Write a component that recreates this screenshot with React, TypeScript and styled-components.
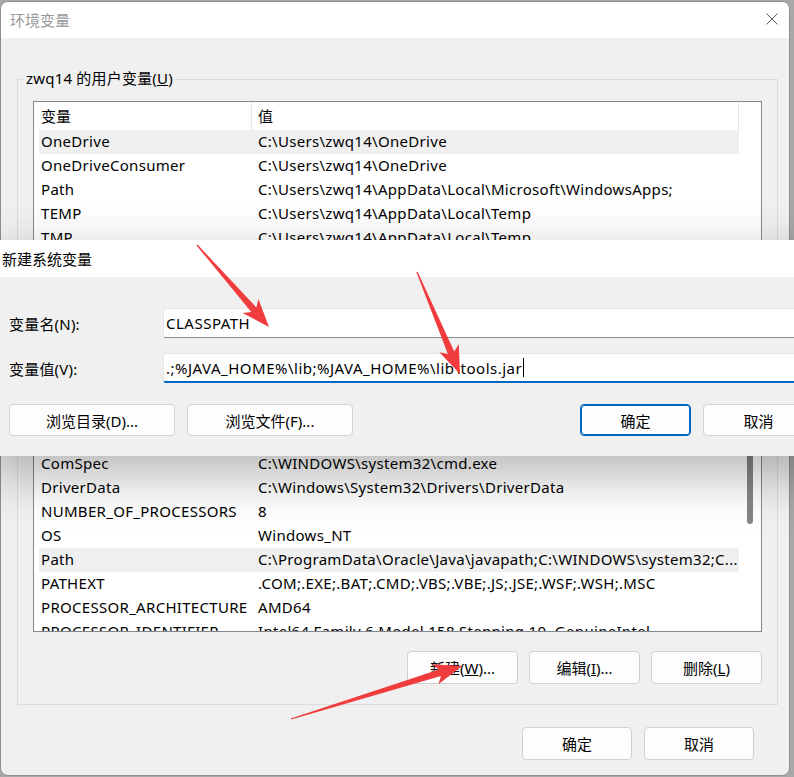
import React from 'react';
import styled, { createGlobalStyle } from 'styled-components';

const GlobalStyle = createGlobalStyle`
  html, body {
    margin: 0;
    padding: 0;
  }
  body {
    font-family: "Noto Sans", "Noto Sans CJK SC", sans-serif;
  }
`;

type Row = { name: string; value: string; selected?: boolean };

const userVars: Row[] = [
  { name: 'OneDrive', value: 'C:\\Users\\zwq14\\OneDrive', selected: true },
  { name: 'OneDriveConsumer', value: 'C:\\Users\\zwq14\\OneDrive' },
  { name: 'Path', value: 'C:\\Users\\zwq14\\AppData\\Local\\Microsoft\\WindowsApps;' },
  { name: 'TEMP', value: 'C:\\Users\\zwq14\\AppData\\Local\\Temp' },
  { name: 'TMP', value: 'C:\\Users\\zwq14\\AppData\\Local\\Temp' },
];

const systemVars: Row[] = [
  { name: 'ComSpec', value: 'C:\\WINDOWS\\system32\\cmd.exe' },
  { name: 'DriverData', value: 'C:\\Windows\\System32\\Drivers\\DriverData' },
  { name: 'NUMBER_OF_PROCESSORS', value: '8' },
  { name: 'OS', value: 'Windows_NT' },
  { name: 'Path', value: 'C:\\ProgramData\\Oracle\\Java\\javapath;C:\\WINDOWS\\system32;C...', selected: true },
  { name: 'PATHEXT', value: '.COM;.EXE;.BAT;.CMD;.VBS;.VBE;.JS;.JSE;.WSF;.WSH;.MSC' },
  { name: 'PROCESSOR_ARCHITECTURE', value: 'AMD64' },
  { name: 'PROCESSOR_IDENTIFIER', value: 'Intel64 Family 6 Model 158 Stepping 10, GenuineIntel' },
  { name: 'PROCESSOR_LEVEL', value: '6' },
];

// tapered marker arrows drawn on top of the screenshot
const arrows = [
  { x1: 197, y1: 245, x2: 269, y2: 327 },
  { x1: 417, y1: 272, x2: 460, y2: 374 },
  { x1: 291, y1: 719, x2: 462, y2: 666 },
];

const arrowPoints = ({ x1, y1, x2, y2 }: { x1: number; y1: number; x2: number; y2: number }) => {
  const dx = x2 - x1;
  const dy = y2 - y1;
  const len = Math.hypot(dx, dy);
  const ux = dx / len;
  const uy = dy / len;
  const px = -uy;
  const py = ux;
  const headLen = 28;
  const headW = 10.5;
  const bx = x2 - ux * headLen;
  const by = y2 - uy * headLen;
  const nx = bx + ux * 5;
  const ny = by + uy * 5;
  const pts = [
    [x1 + px * 0.6, y1 + py * 0.6],
    [nx + px * 3.4, ny + py * 3.4],
    [bx + px * headW, by + py * headW],
    [x2, y2],
    [bx - px * headW, by - py * headW],
    [nx - px * 3.4, ny - py * 3.4],
    [x1 - px * 0.6, y1 - py * 0.6],
  ];
  return pts.map(p => p.map(v => v.toFixed(1)).join(',')).join(' ');
};

const VarList = ({ rows, height, scroll }: { rows: Row[]; height: number; scroll?: boolean }) => (
  <ListBox $height={height}>
    <ListMain>
      <ListHeader>
        <HeaderCell>变量</HeaderCell>
        <HeaderCell>值</HeaderCell>
      </ListHeader>
      {rows.map(r => (
        <ListRow key={r.name} $selected={r.selected}>
          <NameCell>{r.name}</NameCell>
          <ValueCell>{r.value}</ValueCell>
        </ListRow>
      ))}
    </ListMain>
    <ScrollTrack>{scroll && <ScrollThumb />}</ScrollTrack>
  </ListBox>
);

const App = () => (
  <>
    <GlobalStyle />
    <Desktop>
      <Window>
        <TitleBar>
          <WindowTitle>环境变量</WindowTitle>
          <CloseButton>
            <svg width="12" height="12" viewBox="0 0 12 12">
              <path d="M0.5 0.5 L11.5 11.5 M11.5 0.5 L0.5 11.5" stroke="#5a5a5a" strokeWidth="1" fill="none" />
            </svg>
          </CloseButton>
        </TitleBar>

        <WindowBody>
          <GroupBox>
            <Legend>
              zwq14 的用户变量(<u>U</u>)
            </Legend>
            <VarList rows={userVars} height={200} />
            <ButtonRow>
              <Button>
                新建(<u>N</u>)...
              </Button>
              <Button>
                编辑(<u>E</u>)...
              </Button>
              <Button>
                删除(<u>D</u>)
              </Button>
            </ButtonRow>
          </GroupBox>

          <GroupBox $gap={27}>
            <Legend>
              系统变量(<u>S</u>)
            </Legend>
            <VarList rows={systemVars} height={209} scroll />
            <ButtonRow>
              <Button>
                新建(<u>W</u>)...
              </Button>
              <Button>
                编辑(<u>I</u>)...
              </Button>
              <Button>
                删除(<u>L</u>)
              </Button>
            </ButtonRow>
          </GroupBox>

          <FooterRow>
            <Button $width={110}>确定</Button>
            <Button $width={110}>取消</Button>
          </FooterRow>
        </WindowBody>
      </Window>

      <Dialog>
        <DialogTitle>新建系统变量</DialogTitle>
        <DialogBody>
          <FieldGrid>
            <FieldLabel>变量名(N):</FieldLabel>
            <Field>CLASSPATH</Field>
            <FieldLabel>变量值(V):</FieldLabel>
            <Field $focused>
              .;%JAVA_HOME%\lib;%JAVA_HOME%\lib\tools.jar
              <Caret />
            </Field>
          </FieldGrid>
          <DialogButtons>
            <Button $width={166}>浏览目录(D)...</Button>
            <Button $width={166}>浏览文件(F)...</Button>
            <Spacer />
            <Button $width={111} $primary>
              确定
            </Button>
            <Button $width={111}>取消</Button>
          </DialogButtons>
        </DialogBody>
      </Dialog>

      <Marks width="794" height="777" viewBox="0 0 794 777">
        {arrows.map((a, i) => (
          <polygon key={i} points={arrowPoints(a)} fill="#f03c3c" />
        ))}
      </Marks>
    </Desktop>
  </>
);

const Desktop = styled.div`
  position: relative;
  width: 794px;
  height: 777px;
  overflow: hidden;
  background: #a8a8a8;
  font-family: "Noto Sans", "Noto Sans CJK SC", sans-serif;
  font-size: 15px;
  color: #000;
`;

const Window = styled.div`
  position: absolute;
  left: 0;
  top: 1px;
  width: 790px;
  height: 775px;
  box-sizing: border-box;
  border: 1px solid #8f8f8f;
  border-radius: 8px;
  background: #f0f0f0;
  overflow: hidden;
  display: flex;
  flex-direction: column;
`;

const TitleBar = styled.div`
  height: 36px;
  flex-shrink: 0;
  background: #fff;
  display: flex;
  align-items: center;
  justify-content: space-between;
  padding: 0 10px 0 9px;
`;

const WindowTitle = styled.span`
  color: #9a9a9a;
  font-size: 15px;
  margin-top: -2px;
`;

const CloseButton = styled.span`
  display: flex;
  width: 12px;
  height: 12px;
  margin: -2px 1px 0 0;
`;

const WindowBody = styled.div`
  flex: 1;
  display: flex;
  flex-direction: column;
  padding: 0 11px 0 16px;
`;

const GroupBox = styled.div<{ $gap?: number }>`
  margin-top: ${p => p.$gap ?? 41}px;
  border: 1px solid #dcdcdc;
  padding: 0 15px 20px;
  display: flex;
  flex-direction: column;
`;

const Legend = styled.div`
  width: fit-content;
  margin: -12px 0 13px -9px;
  padding: 0 2px;
  line-height: 20px;
  letter-spacing: 0.2px;
  background: #f0f0f0;
`;

const ListBox = styled.div<{ $height: number }>`
  height: ${p => p.$height}px;
  box-sizing: border-box;
  border: 1px solid #828790;
  background: #fff;
  display: flex;
  overflow: hidden;
`;

const ListMain = styled.div`
  flex: 1;
  display: flex;
  flex-direction: column;
  overflow: hidden;
`;

const ListHeader = styled.div`
  display: grid;
  grid-template-columns: 218px 487px;
  height: 28px;
  flex-shrink: 0;
`;

const HeaderCell = styled.div`
  box-sizing: border-box;
  border-right: 1px solid #e5e5e5;
  padding-left: 7px;
  line-height: 28px;

  & + & {
    padding-left: 6px;
  }
`;

const ListRow = styled.div<{ $selected?: boolean }>`
  display: grid;
  grid-template-columns: 213px 486px;
  margin-left: 5px;
  height: 24px;
  flex-shrink: 0;
  line-height: 23px;
  letter-spacing: 0.3px;
  background: ${p => (p.$selected ? '#f0f0f0' : 'transparent')};
`;

const NameCell = styled.div`
  padding-left: 2px;
  white-space: nowrap;
  overflow: hidden;
`;

const ValueCell = styled.div`
  padding-left: 6px;
  white-space: nowrap;
  overflow: hidden;
`;

const ScrollTrack = styled.div`
  width: 22px;
  flex-shrink: 0;
  padding: 3px 0 0 8px;
  box-sizing: border-box;
`;

const ScrollThumb = styled.div`
  width: 6px;
  height: 97px;
  border-radius: 3px;
  background: #858585;
`;

const ButtonRow = styled.div`
  display: flex;
  justify-content: flex-end;
  gap: 11px;
  margin-top: 19px;
`;

const FooterRow = styled.div`
  display: flex;
  justify-content: flex-end;
  gap: 12px;
  margin-top: 22px;
  padding-right: 24px;
`;

const Button = styled.div<{ $width?: number; $primary?: boolean }>`
  width: ${p => p.$width ?? 111}px;
  height: 33px;
  box-sizing: border-box;
  display: flex;
  align-items: center;
  justify-content: center;
  background: #fdfdfd;
  border: 1px solid ${p => (p.$primary ? '#0067c0' : '#d0d0d0')};
  box-shadow: ${p => (p.$primary ? 'inset 0 0 0 1px #0067c0' : 'none')};
  border-radius: 4px;
  font-size: 15px;
  white-space: nowrap;
`;

const Dialog = styled.div`
  position: absolute;
  left: -8px;
  top: 240px;
  width: 839px;
  background: #f0f0f0;
  box-shadow: 0 18px 50px rgba(0, 0, 0, 0.3);
`;

const DialogTitle = styled.div`
  height: 37px;
  line-height: 38px;
  padding-left: 10px;
  background: #fff;
`;

const DialogBody = styled.div`
  padding: 31px 17px 20px;
`;

const FieldGrid = styled.div`
  display: grid;
  grid-template-columns: 154px 1fr;
  row-gap: 15px;
  align-items: center;
`;

const FieldLabel = styled.div`
  font-size: 15px;
  letter-spacing: 0.2px;
`;

const Field = styled.div<{ $focused?: boolean }>`
  height: 30px;
  box-sizing: border-box;
  display: flex;
  align-items: center;
  padding-left: 2px;
  background: #fff;
  border: 1px solid #e5e5e5;
  border-bottom: ${p => (p.$focused ? '2px solid #0067c0' : '1px solid #8a8a8a')};
  border-radius: 3px;
  white-space: nowrap;
  letter-spacing: 0.5px;
`;

const Caret = styled.span`
  display: inline-block;
  width: 1px;
  height: 19px;
  margin-left: 1px;
  background: #000;
`;

const DialogButtons = styled.div`
  display: flex;
  gap: 12px;
  margin-top: 21px;

  & > div {
    height: 32px;
  }
`;

const Spacer = styled.div`
  flex: 1;
`;

const Marks = styled.svg`
  position: absolute;
  left: 0;
  top: 0;
  pointer-events: none;
`;

export default App;
